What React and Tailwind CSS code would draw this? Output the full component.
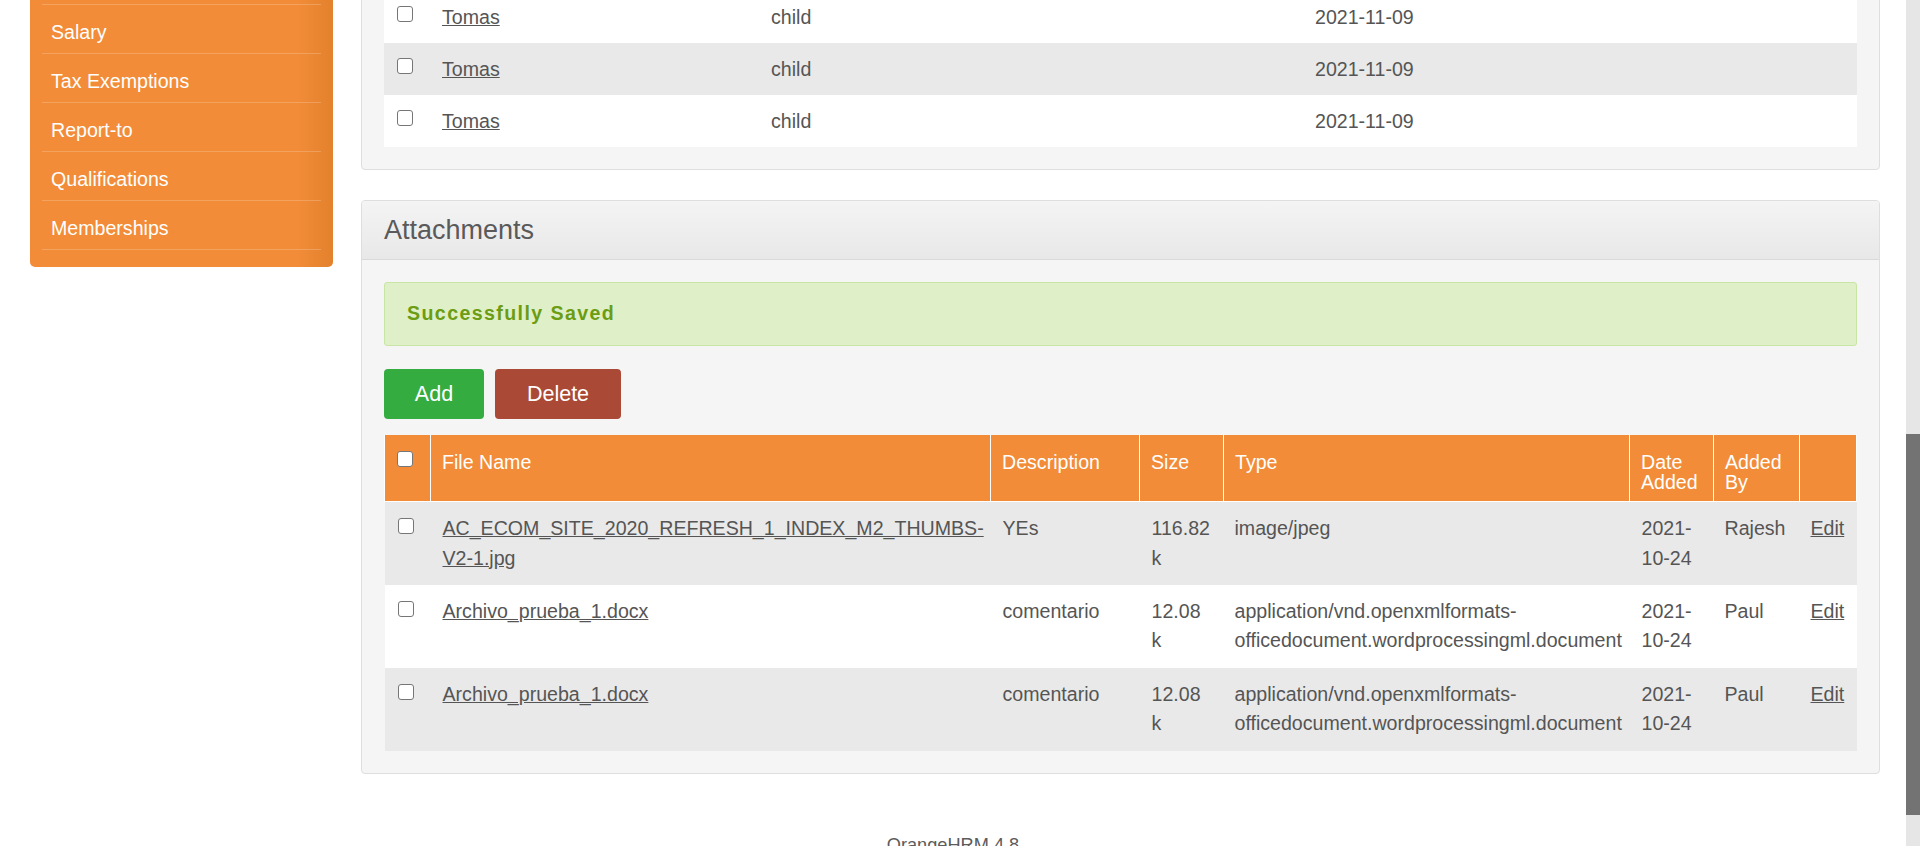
import React from "react";

const sideItems = ["Salary", "Tax Exemptions", "Report-to", "Qualifications", "Memberships"];

function Box() {
  return <span className="block h-[16px] w-[16px] rounded-[3px] border border-[#767676] bg-white" />;
}

const attach = [
  {
    file: ["AC_ECOM_SITE_2020_REFRESH_1_INDEX_M2_THUMBS-", "V2-1.jpg"],
    desc: "YEs",
    size: ["116.82", "k"],
    type: ["image/jpeg"],
    by: "Rajesh",
    bg: "bg-[#e9e9e9]",
  },
  {
    file: ["Archivo_prueba_1.docx"],
    desc: "comentario",
    size: ["12.08", "k"],
    type: ["application/vnd.openxmlformats-", "officedocument.wordprocessingml.document"],
    by: "Paul",
    bg: "bg-white",
  },
  {
    file: ["Archivo_prueba_1.docx"],
    desc: "comentario",
    size: ["12.08", "k"],
    type: ["application/vnd.openxmlformats-", "officedocument.wordprocessingml.document"],
    by: "Paul",
    bg: "bg-[#e9e9e9]",
  },
];

function Lines({ lines }) {
  return lines.map((l, i) => (
    <React.Fragment key={i}>
      {i > 0 && <br />}
      {l}
    </React.Fragment>
  ));
}

export default function App() {
  const th = "border-l border-b border-white pl-[11px] pr-[6px] pt-[18px] pb-[9px] text-left align-top font-normal leading-[19.6px]";
  const td = "pl-[12px] pr-[4px] pt-[12px] pb-[12px] align-top leading-[29.4px]";
  return (
    <div className="flex h-[846px] w-[1920px] overflow-hidden bg-white font-['Liberation_Sans',Arial,sans-serif] text-[19.6px] text-[#555555]">
      <div className="flex min-w-0 flex-1 flex-col">
        <div className="flex items-start">
          <aside className="-mt-[44px] ml-[30px] w-[303px] rounded-b-[5px] bg-[linear-gradient(to_right,#f28c38_88%,#e3812d)] px-[12px] pb-[17px]">
            <div className="h-[49px] border-b border-white/20" />
            {sideItems.map((s) => (
              <div key={s} className="border-b border-white/20 pb-[6px] pl-[9px] pt-[12px] leading-[30px] text-white">
                {s}
              </div>
            ))}
          </aside>

          <main className="ml-[28px] w-[1519px]">
            <section className="-mt-[10px] rounded-[4px] border border-[#dedede] bg-[#f5f5f5] px-[22px] pb-[22px]">
              <table className="w-full table-fixed border-collapse">
                <colgroup>
                  <col className="w-[46px]" />
                  <col className="w-[330px]" />
                  <col className="w-[544px]" />
                  <col />
                </colgroup>
                <tbody>
                  {["bg-white", "bg-[#e9e9e9]", "bg-white"].map((bg, i) => (
                    <tr key={i} className={bg}>
                      <td className="pl-[13px] pt-[15px] align-top">
                        <Box />
                      </td>
                      <td className="py-[11px] pl-[12px] align-top leading-[30px]">
                        <span className="underline">Tomas</span>
                      </td>
                      <td className="py-[11px] pl-[11px] align-top leading-[30px]">child</td>
                      <td className="py-[11px] pl-[11px] align-top leading-[30px]">2021-11-09</td>
                    </tr>
                  ))}
                </tbody>
              </table>
            </section>

            <section className="mt-[30px] overflow-hidden rounded-[4px] border border-[#dedede] bg-[#f5f5f5]">
              <div className="flex h-[59px] items-center border-b border-[#d9d9d9] bg-linear-to-b from-[#f4f4f4] to-[#e8e8e8] px-[22px]">
                <h1 className="text-[27px] text-[#5a5a5a]">Attachments</h1>
              </div>
              <div className="px-[22px] pb-[22px] pt-[22px]">
                <div className="flex h-[64px] items-center rounded-[3px] border border-[#c8e5a5] bg-[#dff0c8] px-[22px]">
                  <span className="font-bold tracking-[1.4px] text-[#6c9c12]">Successfully Saved</span>
                </div>
                <div className="mt-[23px] flex gap-[11px]">
                  <button className="h-[50px] w-[100px] rounded-[4px] bg-[#34ac3f] text-[21.5px] text-white">Add</button>
                  <button className="h-[50px] w-[126px] rounded-[4px] bg-[#aa4936] text-[21.5px] text-white">Delete</button>
                </div>
                <table className="mt-[16px] w-full table-fixed border-collapse whitespace-nowrap">
                  <colgroup>
                    <col className="w-[46px]" />
                    <col className="w-[560px]" />
                    <col className="w-[149px]" />
                    <col className="w-[84px]" />
                    <col className="w-[406px]" />
                    <col className="w-[84px]" />
                    <col className="w-[86px]" />
                    <col />
                  </colgroup>
                  <thead>
                    <tr className="bg-[#f28c38] text-white">
                      <th className="border-l border-b border-white pl-[12px] pt-[16px] pb-[9px] text-left align-top">
                        <Box />
                      </th>
                      <th className={th}>File Name</th>
                      <th className={th}>Description</th>
                      <th className={th}>Size</th>
                      <th className={th}>Type</th>
                      <th className={th}>
                        Date
                        <br />
                        Added
                      </th>
                      <th className={th}>
                        Added
                        <br />
                        By
                      </th>
                      <th className={th + " border-r"}></th>
                    </tr>
                  </thead>
                  <tbody>
                    {attach.map((r, i) => (
                      <tr key={i} className={r.bg}>
                        <td className="pl-[13px] pt-[16px] align-top">
                          <Box />
                        </td>
                        <td className={td}>
                          <span className="underline">
                            <Lines lines={r.file} />
                          </span>
                        </td>
                        <td className={td}>{r.desc}</td>
                        <td className={td}>
                          <Lines lines={r.size} />
                        </td>
                        <td className={td + " !pl-[11px]"}>
                          <Lines lines={r.type} />
                        </td>
                        <td className={td}>
                          <Lines lines={["2021-", "10-24"]} />
                        </td>
                        <td className={td + " !pl-[11px]"}>{r.by}</td>
                        <td className={td + " !pl-[11px]"}>
                          <span className="underline">Edit</span>
                        </td>
                      </tr>
                    ))}
                  </tbody>
                </table>
              </div>
            </section>
          </main>
        </div>
        <footer className="mt-[58px] text-center text-[18.2px] text-[#5c5c5c]">OrangeHRM 4.8</footer>
      </div>
      <div className="flex w-[14px] flex-col bg-[#e6e6e6]">
        <div className="mt-[434px] h-[381px] bg-[#737373]" />
      </div>
    </div>
  );
}
